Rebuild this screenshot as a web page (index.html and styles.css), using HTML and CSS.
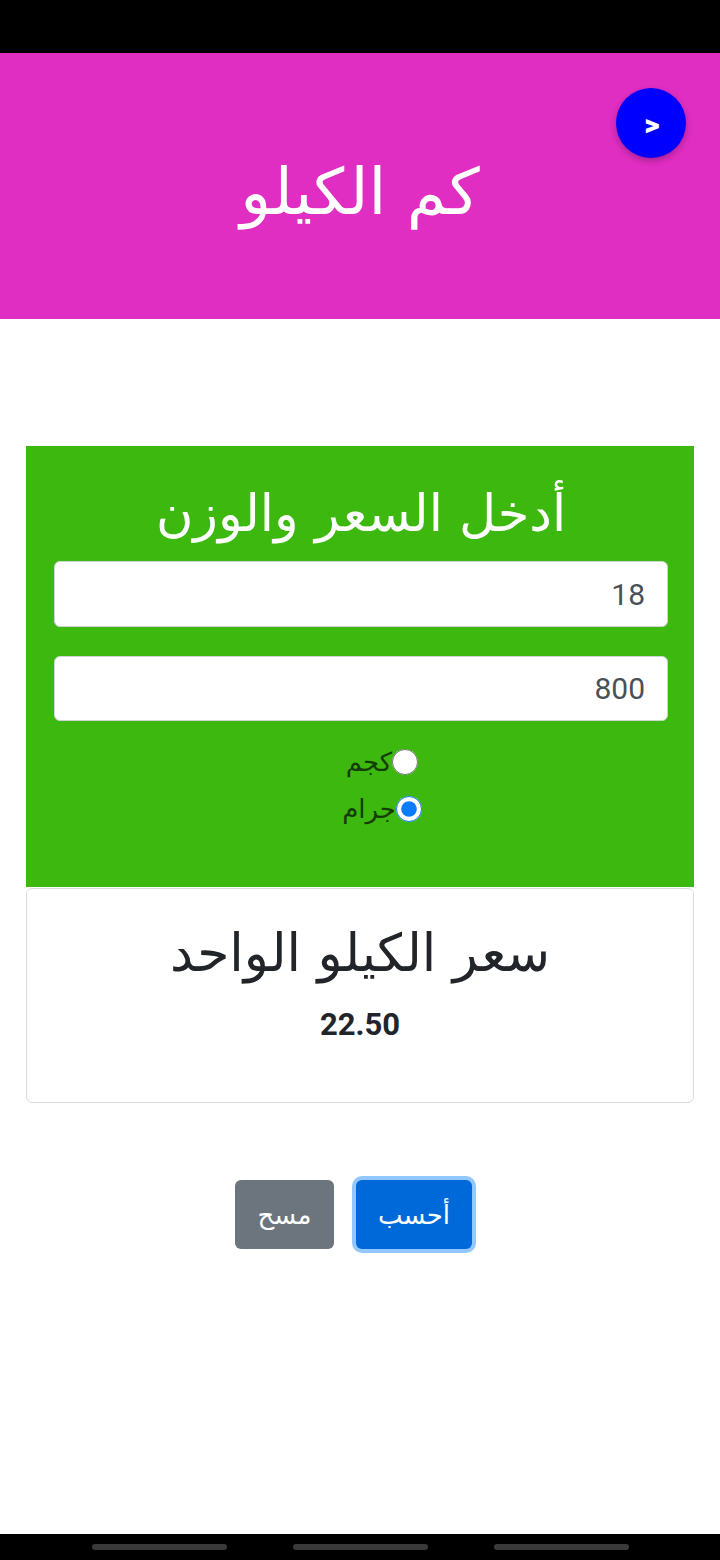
FILE: index.html
```html
<!DOCTYPE html>
<html lang="ar" dir="rtl">
<head>
<meta charset="utf-8">
<link rel="stylesheet" href="styles.css">
</head>
<body>
<div class="page">
  <div class="statusbar"></div>
  <header class="header">
    <h1 class="title">كم الكيلو</h1>
    <button class="fab" dir="ltr">&gt;</button>
  </header>
  <main class="main">
    <section class="input-card">
      <h2 class="card-title">أدخل السعر والوزن</h2>
      <input class="field" type="text" value="18" dir="ltr">
      <input class="field" type="text" value="800" dir="ltr">
      <div class="radios">
        <label class="radio"><input type="radio" name="unit"><span>كجم</span></label>
        <label class="radio"><input type="radio" name="unit" checked><span>جرام</span></label>
      </div>
    </section>
    <section class="result-card">
      <h2 class="result-title">سعر الكيلو الواحد</h2>
      <div class="result-value">22.50</div>
    </section>
    <div class="actions">
      <button class="btn btn-primary">أحسب</button>
      <button class="btn btn-secondary">مسح</button>
    </div>
  </main>
  <div class="navbar">
    <span class="pill"></span>
    <span class="pill"></span>
    <span class="pill"></span>
  </div>
</div>
</body>
</html>
```

FILE: styles.css
```css
html, body {
  margin: 0;
  padding: 0;
  background: #fff;
}
body {
  font-family: "DejaVu Sans", "Noto Sans", sans-serif;
}
.page {
  width: 720px;
  min-height: 1560px;
  display: flex;
  flex-direction: column;
}
.statusbar {
  height: 53px;
  background: #000;
}
.header {
  position: relative;
  height: 266px;
  background: #e02dc2;
  display: flex;
  align-items: center;
  justify-content: center;
}
.title {
  margin: 12px 0 0;
  color: #fff;
  font-weight: 400;
  font-size: 64px;
}
.fab {
  position: absolute;
  top: 35px;
  left: 616px;
  width: 70px;
  height: 70px;
  border-radius: 50%;
  border: none;
  background: #0000ff;
  color: #fff;
  direction: ltr;
  unicode-bidi: isolate;
  font-family: "Roboto", sans-serif;
  font-weight: 900;
  font-size: 30px;
  line-height: 1;
  box-shadow: 0 3px 6px rgba(0,0,0,0.25);
  padding: 4px 0 0 2px;
}
.main {
  padding: 127px 26px 0;
  display: flex;
  flex-direction: column;
}
.input-card {
  background: #3db80f;
  height: 441px;
  box-sizing: border-box;
  padding: 32px 26px 0 28px;
  display: flex;
  flex-direction: column;
}
.card-title {
  margin: 0 0 11px;
  text-align: center;
  color: #fff;
  font-weight: 400;
  font-size: 51px;
  line-height: 72px;
}
.field {
  height: 66px;
  box-sizing: border-box;
  margin: 0 0 29px;
  border: 1px solid #ced4da;
  border-radius: 6px;
  background: #fff;
  font-family: "Roboto", sans-serif;
  font-size: 30px;
  color: #495057;
  text-align: right;
  padding: 0 22px;
}
.field + .field {
  height: 65px;
  margin-bottom: 20px;
}
.radios {
  display: flex;
  flex-direction: column;
  align-items: center;
  gap: 5px;
  padding-left: 42px;
}
.radio {
  display: flex;
  align-items: center;
  font-size: 26px;
  color: #143d05;
  height: 42px;
}
.radio input {
  margin: 0;
  width: 26px;
  height: 26px;
  accent-color: #0a7cff;
}
.result-card {
  margin-top: 1px;
  height: 215px;
  box-sizing: border-box;
  border: 1px solid #dcdcdc;
  border-radius: 6px;
  background: #fff;
  padding-top: 28px;
  text-align: center;
}
.result-title {
  margin: 0;
  font-weight: 400;
  font-size: 52px;
  line-height: 72px;
  color: #212529;
}
.result-value {
  margin-top: 18px;
  font-family: "Roboto", sans-serif;
  font-weight: 700;
  font-size: 31px;
  line-height: 36px;
  color: #212529;
}
.actions {
  margin-top: 77px;
  display: flex;
  justify-content: center;
  align-items: center;
  gap: 22px;
  padding-right: 13px;
}
.btn {
  height: 69px;
  border: none;
  border-radius: 6px;
  color: #fff;
  font-family: "DejaVu Sans", sans-serif;
  font-size: 26px;
}
.btn-primary {
  width: 116px;
  background: #0069d9;
  box-shadow: 0 0 0 4px rgba(38,143,255,0.5);
}
.btn-secondary {
  width: 99px;
  background: #6c757d;
}
.navbar {
  margin-top: auto;
  height: 26px;
  background: #000;
  display: flex;
  direction: ltr;
  justify-content: center;
  align-items: center;
  gap: 66px;
}
.pill {
  width: 135px;
  height: 6px;
  border-radius: 3px;
  background: #3a3a3a;
}
```
